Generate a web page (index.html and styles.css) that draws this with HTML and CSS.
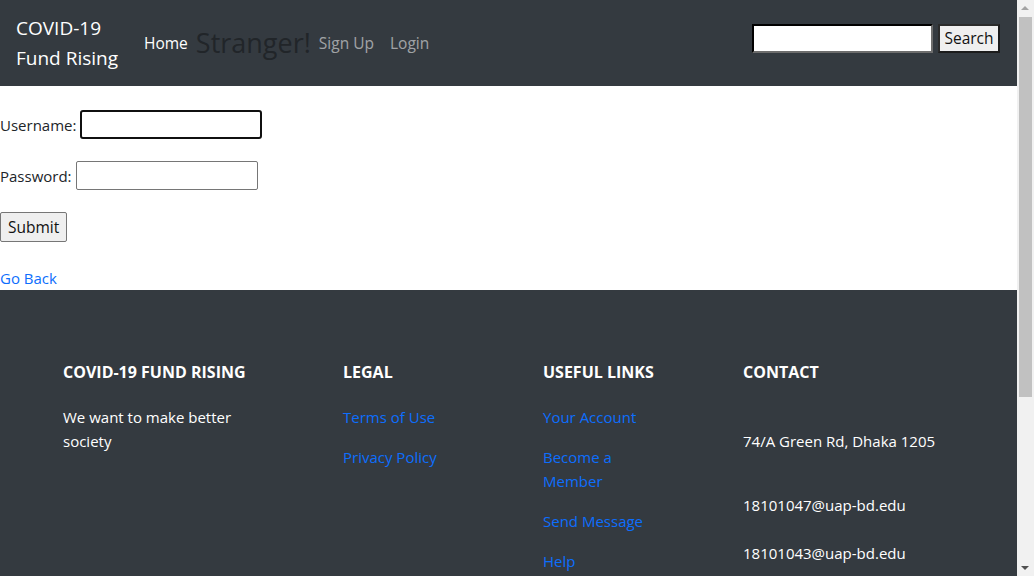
FILE: index.html
```html
<!DOCTYPE html>
<html lang="en">
<head>
<meta charset="utf-8">
<title>Login - COVID-19 Fund Rising</title>
<link rel="stylesheet" href="styles.css">
</head>
<body>
<div class="page">
<nav class="navbar">
  <a class="brand" href="#"><span class="brand-line">COVID-19</span><span class="brand-line">Fund Rising</span></a>
  <ul class="nav">
    <li><a class="nav-link active" href="#">Home</a></li>
    <li><h3 class="greet">Stranger!</h3></li>
    <li><a class="nav-link" href="#">Sign Up</a></li>
    <li><a class="nav-link" href="#">Login</a></li>
  </ul>
  <form class="search">
    <input class="search-input" type="text">
    <button class="search-btn" type="button">Search</button>
  </form>
</nav>

<main class="login">
  <div class="row row-user">
    <label for="u">Username:</label>
    <input id="u" class="field field-focus" type="text">
  </div>
  <div class="row row-pass">
    <label for="p">Password:</label>
    <input id="p" class="field" type="password">
  </div>
  <div class="row row-submit">
    <button class="submit" type="button">Submit</button>
  </div>
  <a class="back" href="#">Go Back</a>
</main>

<footer class="footer">
  <div class="cols">
    <div class="col col-about">
      <h4 class="col-title">COVID-19 FUND RISING</h4>
      <p class="about">We want to make better society</p>
    </div>
    <div class="col col-legal">
      <h4 class="col-title">LEGAL</h4>
      <ul class="links">
        <li><a href="#">Terms of Use</a></li>
        <li><a href="#">Privacy Policy</a></li>
      </ul>
    </div>
    <div class="col col-useful">
      <h4 class="col-title">USEFUL LINKS</h4>
      <ul class="links links-narrow">
        <li><a href="#">Your Account</a></li>
        <li><a href="#">Become a Member</a></li>
        <li><a href="#">Send Message</a></li>
        <li><a href="#">Help</a></li>
      </ul>
    </div>
    <div class="col col-contact">
      <h4 class="col-title">CONTACT</h4>
      <p class="addr">74/A Green Rd, Dhaka 1205</p>
      <p class="mail mail-1">18101047@uap-bd.edu</p>
      <p class="mail mail-2">18101043@uap-bd.edu</p>
    </div>
  </div>
</footer>
</div>

<div class="scrollbar" aria-hidden="true">
  <span class="sb-arrow sb-up"></span>
  <span class="sb-thumb"></span>
  <span class="sb-arrow sb-down"></span>
</div>
</body>
</html>
```

FILE: styles.css
```css
* { box-sizing: border-box; }

html, body {
  margin: 0;
  padding: 0;
}

body {
  font-family: "Open Sans", "Noto Sans", "Liberation Sans", sans-serif;
  font-size: 15px;
  line-height: 24px;
  color: #212529;
  background: #fff;
}

.page {
  width: 1017px;
}

a { text-decoration: none; }

/* ---------- navbar ---------- */
.navbar {
  display: flex;
  align-items: center;
  background: #343a40;
  height: 86px;
  padding: 8px 17px 8px 16px;
}

.brand {
  display: flex;
  flex-direction: column;
  color: #fff;
  font-size: 19px;
  line-height: 30px;
  padding: 5px 0;
  margin-right: 18px;
}

.nav {
  display: flex;
  align-items: center;
  list-style: none;
  margin: 0;
  padding: 0;
}

.nav-link {
  display: block;
  padding: 8px 8px;
  color: rgba(255, 255, 255, 0.55);
  font-size: 15.5px;
}

.nav-link.active { color: #fff; }

.greet {
  margin: 0;
  font-size: 27px;
  font-weight: 500;
  line-height: 1.2;
  color: #212529;
}

.search {
  margin-left: auto;
  display: flex;
  align-items: center;
  gap: 5px;
  margin-bottom: 9px;
}

.search-input {
  width: 181px;
  height: 29px;
  border: 2px inset;
  border-color: #1e1e1e #6d6d6d #6d6d6d #1e1e1e;
  background: #fff;
  padding: 1px 2px;
  font: inherit;
}

.search-btn {
  height: 29px;
  width: 62px;
  padding: 0;
  border: 2px solid;
  border-color: #2b2b2b #1c1c1c #1c1c1c #2b2b2b;
  background: #efefef;
  color: #111;
  font: inherit;
  font-size: 15.5px;
  line-height: 1;
}

/* ---------- login form ---------- */
.login {
  padding: 24px 0 0;
}

.row {
  display: flex;
  align-items: center;
}

.row-user { height: 29px; }
.row-pass { height: 29px; margin-top: 22px; }
.row-submit { height: 30px; margin-top: 22px; }

.row label { margin-right: 4px; }

.field {
  width: 182px;
  height: 29px;
  border: 1px solid #767676;
  border-radius: 2px;
  font: inherit;
  padding: 1px 2px;
}

.field-focus {
  border: 2px solid #101010;
  border-radius: 3px;
}

.submit {
  height: 30px;
  padding: 0 7px;
  border: 1px solid #767676;
  border-radius: 2px;
  background: #efefef;
  color: #111;
  font: inherit;
  font-size: 15.5px;
}

.back {
  display: block;
  margin-top: 24px;
  color: #0d6efd;
  line-height: 24px;
}

/* ---------- footer ---------- */
.footer {
  background: #343a40;
  color: #fff;
  padding: 70px 0 40px 63px;
}

.cols {
  display: flex;
}

.col-about { width: 280px; }
.col-legal { width: 200px; }
.col-useful { width: 200px; }
.col-contact { width: 240px; }

.col-title {
  margin: 0 0 21px;
  font-size: 16px;
  font-weight: 700;
  line-height: 24px;
}

.about {
  margin: 0;
  width: 190px;
}

.links {
  list-style: none;
  margin: 0;
  padding: 0;
  display: flex;
  flex-direction: column;
  gap: 16px;
}

.links a { color: #0d6efd; }

.links-narrow { width: 108px; }

.addr { margin: 45px 0 0; }
.mail { margin: 0; }
.mail-1 { margin-top: 40px; }
.mail-2 { margin-top: 24px; margin-bottom: 220px; }

/* ---------- browser scrollbar look ---------- */
.scrollbar {
  position: fixed;
  top: 0;
  right: 0;
  width: 17px;
  height: 100vh;
  background: #f1f1f1;
}

.sb-thumb {
  position: absolute;
  left: 2px;
  top: 17px;
  width: 13px;
  height: 380px;
  background: #c1c1c1;
}

.sb-arrow {
  position: absolute;
  left: 4px;
  width: 0;
  height: 0;
  border-left: 4.5px solid transparent;
  border-right: 4.5px solid transparent;
}

.sb-up {
  top: 6px;
  border-bottom: 4px solid #a3a3a3;
}

.sb-down {
  bottom: 6px;
  border-top: 4px solid #505050;
}
```
